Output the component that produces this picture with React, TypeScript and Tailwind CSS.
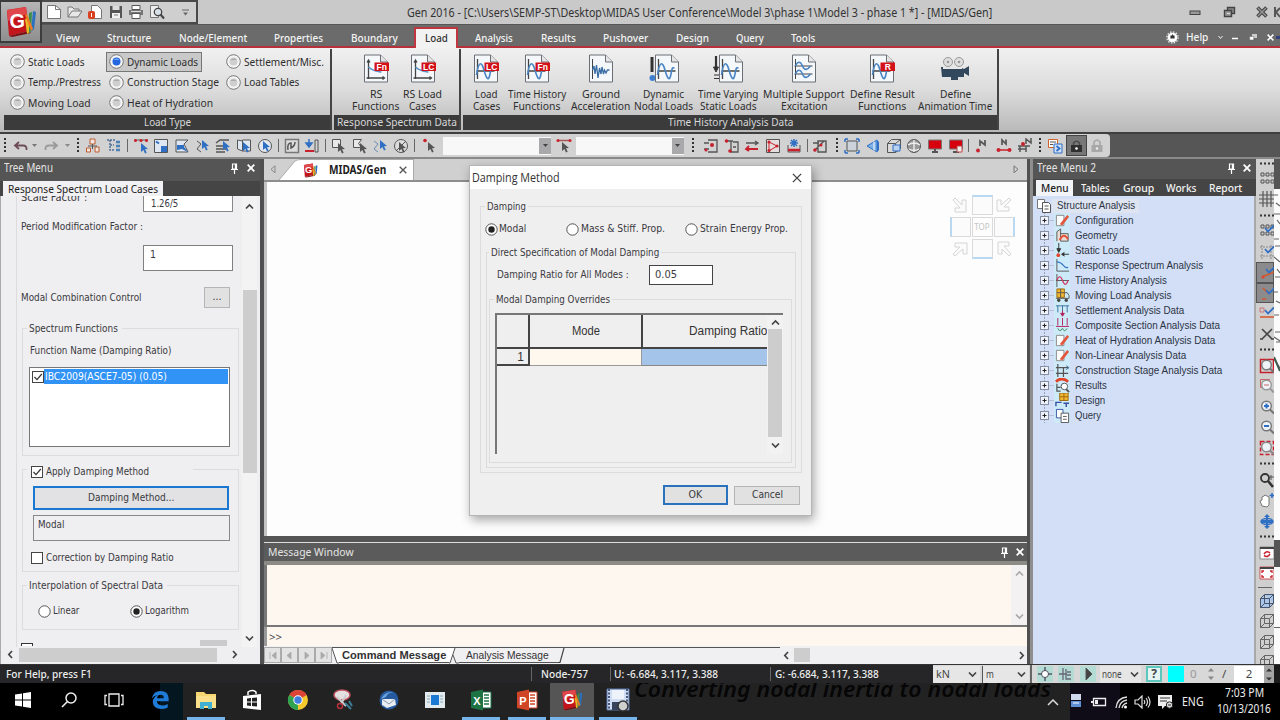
import React, { useLayoutEffect, useRef, useState } from "react";

type Kids = { children?: React.ReactNode };

/* Text set on one line and fitted to a given width */
function T({ w, className = "", children }: { w: number; className?: string } & Kids) {
  const ref = useRef<HTMLSpanElement>(null);
  const [k, setK] = useState(1);
  useLayoutEffect(() => {
    if (ref.current && ref.current.offsetWidth) setK(w / ref.current.offsetWidth);
  }, [w]);
  return (
    <span className={"inline-block shrink-0 text-left whitespace-nowrap " + className} style={{ width: w }}>
      <span ref={ref} className="inline-block origin-left" style={{ transform: `scaleX(${k})` }}>
        {children}
      </span>
    </span>
  );
}

function Ic({ s = 16, h, v, className = "", children }: { s?: number; h?: number; v?: string; className?: string } & Kids) {
  return (
    <svg width={s} height={h ?? s} viewBox={v ?? `0 0 ${s} ${h ?? s}`} fill="none" className={"shrink-0 " + className}>
      {children}
    </svg>
  );
}

const Pin = () => (
  <Ic s={9} h={11}>
    <path d="M2.5 1h4v5h-4zM1 6.5h7M4.5 7v4" stroke="#fff" strokeWidth="1.2" />
    <path d="M5.5 1v5" stroke="#fff" strokeWidth="1.4" />
  </Ic>
);
const Cross = ({ c = "#fff", s = 8, t = 1.8 }: { c?: string; s?: number; t?: number }) => (
  <Ic s={s} v="0 0 8 8">
    <path d="M.7.7l6.6 6.6M7.3.7L.7 7.3" stroke={c} strokeWidth={t} />
  </Ic>
);
const Chev = ({ d, c = "#444", s = 9 }: { d: "u" | "d" | "l" | "r"; c?: string; s?: number }) => (
  <Ic s={s} v="0 0 9 9">
    <path
      d={{ u: "M1 6.5L4.5 3 8 6.5", d: "M1 2.5L4.5 6 8 2.5", l: "M6 1L2.8 4.5 6 8", r: "M3 1l3.200 3.500L3 8" }[d]}
      stroke={c}
      strokeWidth="1.7"
    />
  </Ic>
);

const GLogo = ({ s }: { s: number }) => (
  <Ic s={s} v="0 0 32 32">
    <path d="M2 4l19-3 3 24-20 5z" fill="#c3161c" />
    <path d="M2 4l19-3 .8 7L3 15z" fill="#e0474a" />
    <path d="M4 30l20-5 2 2-19 4z" fill="#7a0d10" />
    <text x="4.500" y="22" fontFamily="Liberation Sans" fontWeight="bold" fontSize="20" fill="#fff">G</text>
    <path d="M20 13l3-1 2 14-3 2z" fill="#e8b923" />
    <path d="M24 7l3-1-1 19-2 2z" fill="#3b8f4a" />
    <path d="M28 5l3 1-2 17-3 3z" fill="#2a6fc0" />
    <path d="M20 9l2-1 6 15-2 2z" fill="#ef7b22" />
  </Ic>
);

const Radio = ({ on }: { on?: boolean }) => (
  <Ic s={13}>
    <circle cx="6.5" cy="6.5" r="5.7" fill="#fff" stroke="#555" />
    {on && <circle cx="6.5" cy="6.5" r="3.2" fill="#222" />}
  </Ic>
);
const Check = ({ on }: { on?: boolean }) => (
  <Ic s={12}>
    <rect x=".5" y=".5" width="11" height="11" fill="#fff" stroke="#444" />
    {on && <path d="M2.500 6l2.500 2.700 4.800-5.700" stroke="#333" strokeWidth="1.200" />}
  </Ic>
);

function Group({ className = "", legend, children }: { className?: string; legend?: React.ReactNode } & Kids) {
  return (
    <div className={"shrink-0 border border-[#dcdbde] " + className}>
      <div className="-mt-[7px] flex h-[14px] items-center">{legend}</div>
      {children}
    </div>
  );
}

/* ---------- header ---------- */

const tabs: [string, number][] = [
  ["View", 24], ["Structure", 44], ["Node/Element", 68], ["Properties", 49], ["Boundary", 47], ["Load", 23],
  ["Analysis", 38], ["Results", 35], ["Pushover", 45], ["Design", 33], ["Query", 28], ["Tools", 24],
];

function Header() {
  return (
    <div className="flex h-[48px] shrink-0 border-b-2 border-[#b8303a] bg-[#6b6b6b]">
      <div className="flex h-[43px] w-[42px] shrink-0 items-center justify-center border-2 border-l-[1px] border-[#3c3c3c] bg-gradient-to-b from-[#b5b5b5] to-[#8f8f8f]">
        <GLogo s={32} />
      </div>
      <div className="flex min-w-0 flex-1 flex-col">
        <div className="flex h-[25px] shrink-0 items-center border-b border-[#565656] bg-[#c9c9c9]">
          <div className="flex h-[24px] w-[156px] shrink-0 items-center gap-[4.500px] border-2 border-l-0 border-[#4a4a4a] bg-[#cfcfcf] pl-[4px]">
            <Ic><path d="M1.500 1.500h8l5 4v9h-13z" fill="#fff" stroke="#777" /><path d="M9.500 1.500v4h5" stroke="#777" /></Ic>
            <Ic><path d="M1 13V3h4l2 2h5v2M1 13l4-6h10l-4 6z" fill="#e8e8e8" stroke="#777" /></Ic>
            <Ic><path d="M4.500 1.500h6l4 4v9h-10z" fill="#fff" stroke="#777" /><rect x="1" y="7" width="7" height="8" rx="2" fill="#d8401f" /><path d="M4.500 9v4" stroke="#fff" /></Ic>
            <Ic><path d="M2 2h12v12H2z" fill="#555" /><path d="M4.500 2h7v4h-7z" fill="#ddd" /><path d="M4 9h8v5H4z" fill="#f2f2f2" /><path d="M6 11h4" stroke="#777" /></Ic>
            <Ic><path d="M4 1.500h8v4H4z" fill="#fff" stroke="#555" /><path d="M1 6h14v5H1z" fill="#777" /><path d="M4 9.500h8v5H4z" fill="#fff" stroke="#555" /><path d="M3 7.500h10" stroke="#ddd" /></Ic>
            <Ic><path d="M1.500 1.500h8v12h-8z" fill="#eee" stroke="#777" /><circle cx="9" cy="8" r="3.700" fill="#d9e2ea" stroke="#444" strokeWidth="1.300" /><path d="M11.500 10.500l3.500 4" stroke="#444" strokeWidth="2" /></Ic>
            <Ic s={7} className="ml-[13px]"><path d="M0 1h7" stroke="#666" /><path d="M1 3.500h5l-2.500 3z" fill="#666" /></Ic>
          </div>
          <div className="ml-[209px] flex h-full items-center pt-[2px] text-[12px] text-[#333]">
            <T w={585} className="leading-[14px]">Gen 2016 - [C:\Users\SEMP-ST\Desktop\MIDAS User Conference\Model 3\phase 1\Model 3 - phase 1 *] - [MIDAS/Gen]</T>
          </div>
          <div className="ml-auto flex items-center pr-[0px]">
            <Ic s={12}><rect x="1" y="5" width="10" height="3.500" fill="#999" stroke="#444" /></Ic>
            <Ic s={13} className="ml-[22px]"><path d="M4.500 1.500h7v6h-7z" fill="#888" stroke="#444" strokeWidth="1.400" /><path d="M1.500 4.500h7v6h-7z" fill="#999" stroke="#444" strokeWidth="1.400" /><path d="M4 7.500h3" stroke="#ddd" /></Ic>
            <Ic s={12} className="ml-[20px]"><path d="M1.500 1.500l9 9M10.500 1.500l-9 9" stroke="#444" strokeWidth="3.600" /><path d="M2 2l8 8M10 2l-8 8" stroke="#999" strokeWidth="1.300" /></Ic>
            <Ic s={7} h={12} className="ml-[5px]"><path d="M2 1v10M2 7l5-5M3 6l4 5" stroke="#555" strokeWidth="2" /></Ic>
          </div>
        </div>
        <div className="flex min-h-0 flex-1 text-[11.500px] font-medium text-[#f4f4f4]">
          {tabs.map(([t, w]) =>
            t === "Load" ? (
              <div key={t} className="-mb-[2px] ml-[3.500px] mr-[3px] mt-[2px] flex h-[21px] w-[44px] shrink-0 items-start justify-center border-2 border-b-0 border-[#c0363f] bg-[#f2f2f2] pt-[2px] text-[#333]">
                <T w={w} className="leading-[14px]">{t}</T>
              </div>
            ) : (
              <div key={t} className="flex shrink-0 items-center pl-[14px] pr-[13.400px] pt-[4px]">
                <T w={w} className="leading-[14px]">{t}</T>
              </div>
            )
          )}
          <div className="ml-auto flex items-center pt-[3px]">
            <Ic s={13}><circle cx="6.500" cy="6.500" r="4.800" fill="#fff" /><circle cx="6.500" cy="6.500" r="5.600" stroke="#ddd" strokeWidth="1.500" strokeDasharray="1.500 1.400" /><path d="M6.500 3.500v4M5 5h3v2H5z" fill="#333" stroke="#333" strokeWidth="1.200" /></Ic>
            <T w={22} className="ml-[7px] leading-[14px]">Help</T>
            <Ic s={5} className="ml-[10px]"><path d="M.5 1l2 2.500 2-2.500" stroke="#eee" /></Ic>
            <Ic s={6} className="ml-[9px]"><path d="M0 4.500h6" stroke="#fff" strokeWidth="1.500" /></Ic>
            <Ic s={8} className="ml-[11px]"><path d="M3 1h5v4H3z" fill="#ccc" /><path d="M.7 3.500h4v3.500h-4z" fill="#fff" stroke="#666" strokeWidth=".5" /></Ic>
            <span className="ml-[10px] flex"><Cross s={7} /></span>
            <span className="ml-[2px] h-[3px] w-[4px] bg-[#35407f]" />
          </div>
        </div>
      </div>
    </div>
  );
}

/* ---------- ribbon ---------- */

const RibRadio = ({ t, w, on }: { t: string; w: number; on?: boolean }) => (
  <div className="flex h-[20.500px] items-center">
    <div className={"flex h-[20px] shrink-0 items-center pl-[2px] pr-[3px] " + (on ? "-ml-[1px] border border-[#777] bg-[#c9c9c9] pl-[1px]" : "")}>
      <Ic s={15}>
        <circle cx="7.500" cy="7.500" r="6.800" fill="#f4f4f4" stroke="#777" />
        <circle cx="7.500" cy="7.500" r="4" fill={on ? "#2465e0" : "#cfcfcf"} />
        <path d="M4.500 6a3.500 3 0 016 0" fill={on ? "#6fa2fa" : "#aaa"} />
      </Ic>
      <T w={w} className="ml-[3px] leading-[14px]">{t}</T>
    </div>
  </div>
);

const wave = "M3 21c2-14 5-14 7.500-5s4.500 12 6 4 1.500-6 3.500-6";
function Doc({ badge, kind, side }: { badge?: string; kind: "rs" | "wave" | "ground" | "multi"; side?: "dot" | "arrow" }) {
  return (
    <Ic s={side ? 30 : 26} h={29}>
      {side === "dot" && <><path d="M3 3v15" stroke="#333" strokeWidth="3" /><circle cx="3.500" cy="24" r="3" fill="#3f7fd0" /></>}
      {side === "arrow" && <><path d="M3 2v12" stroke="#333" strokeWidth="2.200" /><path d="M.5 13h5L3 18zM1 21h5M1 24.500h5" fill="#333" stroke="#333" strokeWidth="1" /></>}
      <g transform={side ? "translate(5.500 0)" : "translate(.5 0)"}>
        <path d="M1 1h16l7 7v20H1z" fill="#f5f8fb" stroke="#6b6f75" />
        <path d="M17 1v7h7" fill="#e5e5e5" stroke="#6b6f75" />
        {kind === "rs" && <><path d="M5 6v19M3 24h18M3.500 8.500L5 6l1.500 2.500M19 22.500l2 1.500-2 1.500" stroke="#444" strokeWidth="1.300" /><path d="M5 13c4 4 7 4 13 5" stroke="#5b93c8" strokeWidth="1.600" /></>}
        {kind === "wave" && <><path d="M4 5v20M3 17h18" stroke="#444" strokeWidth="1.300" /><path d={wave} stroke="#4b86c4" strokeWidth="1.600" /></>}
        {kind === "ground" && <><path d="M4 5v20" stroke="#444" strokeWidth="1" /><path d="M4 16l1.500-4 1 8 1.500-9 1.500 13 1.500-10 1.500 6 1-7 1.500 7 1-4 1.500 3 1.500-3h2" stroke="#3a6ea5" strokeWidth="1.300" /></>}
        {kind === "multi" && <><path d="M4 5v20M3 12h18M3 20h18" stroke="#444" strokeWidth="1" /><path d="M4 12c2-5 5-5 7 0s5 4 8 0M4 20c2-5 5-5 7 0s5 4 8 0" stroke="#4b86c4" strokeWidth="1.600" /></>}
        {badge && (
          <>
            <rect x="11" y="8.500" width="14.500" height="8.500" fill="#d41018" />
            <text x="18.200" y="15.800" textAnchor="middle" fontFamily="Liberation Sans" fontWeight="bold" fontSize="8.500" fill="#fff">{badge}</text>
          </>
        )}
      </g>
    </Ic>
  );
}

const Big = ({ icon, a, b, aw, bw, className }: { icon: React.ReactNode; a: string; b: string; aw: number; bw: number; className: string }) => (
  <div className={"flex shrink-0 flex-col items-center pt-[5px] " + className}>
    {icon}
    <div className="mt-[5px] flex h-[12px] items-center"><T w={aw} className="leading-[14px]">{a}</T></div>
    <div className="flex h-[12px] items-center"><T w={bw} className="leading-[14px]">{b}</T></div>
  </div>
);

const Panel = ({ title, tw, className, children }: { title: string; tw: number; className: string } & Kids) => (
  <div className={"flex h-[81px] shrink-0 flex-col border-r-2 border-[#444] " + className}>
    <div className="flex min-h-0 flex-1">{children}</div>
    <div className="flex h-[15px] items-center justify-center bg-[#3b3b3b] pb-[1px] text-[#d8d8d8]">
      <T w={tw} className="leading-[14px]">{title}</T>
    </div>
  </div>
);

const Ribbon = () => (
  <div className="flex h-[86px] shrink-0 border-b-2 border-[#3f3f3f] bg-gradient-to-b from-[#f1f1f1] via-[#dcdcdc] to-[#b9b9b9] pl-[4px] pt-[1px] text-[11.500px] text-[#2e2e2e]">
    <Panel title="Load Type" tw={47} className="w-[328px]">
      <div className="w-[98.500px] pl-[4px] pt-[2.500px]">
        <RibRadio t="Static Loads" w={57} /><RibRadio t="Temp./Prestress" w={73} /><RibRadio t="Moving Load" w={63} />
      </div>
      <div className="w-[117px] pl-[4px] pt-[2.500px]">
        <RibRadio t="Dynamic Loads" w={71} on /><RibRadio t="Construction Stage" w={92} /><RibRadio t="Heat of Hydration" w={86} />
      </div>
      <div className="pl-[4px] pt-[2.500px]">
        <RibRadio t="Settlement/Misc." w={80} /><RibRadio t="Load Tables" w={55} />
      </div>
    </Panel>
    <Panel title="Response Spectrum Data" tw={120} className="ml-[2px] w-[127px] pl-0">
      <Big className="ml-[16px] w-[51px]" icon={<Doc kind="rs" badge="Fn" />} a="RS" b="Functions" aw={12} bw={47} />
      <Big className="w-[43px]" icon={<Doc kind="rs" badge="LC" />} a="RS Load" b="Cases" aw={39} bw={27} />
    </Panel>
    <Panel title="Time History Analysis Data" tw={125} className="ml-[2px] w-[536px]">
      <Big className="ml-[7px] w-[32px]" icon={<Doc kind="wave" badge="LC" />} a="Load" b="Cases" aw={23} bw={27} />
      <Big className="w-[69px]" icon={<Doc kind="wave" badge="Fn" />} a="Time History" b="Functions" aw={58} bw={47} />
      <Big className="w-[59px]" icon={<Doc kind="ground" />} a="Ground" b="Acceleration" aw={38} bw={59} />
      <Big className="w-[67px]" icon={<Doc kind="wave" side="dot" />} a="Dynamic" b="Nodal Loads" aw={41} bw={59} />
      <Big className="w-[62px]" icon={<Doc kind="wave" side="arrow" />} a="Time Varying" b="Static Loads" aw={60} bw={57} />
      <Big className="w-[90px]" icon={<Doc kind="multi" />} a="Multiple Support" b="Excitation" aw={82} bw={47} />
      <Big className="w-[66px]" icon={<Doc kind="wave" badge="R" />} a="Define Result" b="Functions" aw={65} bw={48} />
      <Big
        className="w-[80px]"
        icon={
          <Ic s={30} h={29}>
            <circle cx="8" cy="8" r="4.500" fill="#dedede" stroke="#999" /><circle cx="19" cy="8" r="4.500" fill="#dedede" stroke="#999" />
            <circle cx="8" cy="8" r="1.300" fill="#999" /><circle cx="19" cy="8" r="1.300" fill="#999" />
            <path d="M1 13h2v2h19v-1l2 1 5-3v10l-5-3v4h-6v3h-7v-3H2z" fill="#32485c" />
          </Ic>
        }
        a="Define" b="Animation Time" aw={31} bw={74}
      />
    </Panel>
  </div>
);

/* ---------- icon toolbar ---------- */

const cur = (x: number, y: number, c: string) => <path d={`M${x} ${y}l7 6-3 .3 1.700 3.400-1.700.8-1.600-3.400-2.400 2z`} fill={c} />;
const B = "#2f6fc4";
const K = "#555";
const R = "#c8202c";
const sq = "M1.500 1.500h13v13h-13z";

const Slot = ({ children }: Kids) => (
  <div className="flex h-full w-[20.700px] shrink-0 items-center justify-center"><Ic>{children}</Ic></div>
);
const Sep = () => <div className="mx-[2.500px] h-[13px] w-[1px] shrink-0 bg-[#666]" />;
const Grip = () => (
  <Ic s={6} h={16}><path d="M3 0v16" stroke="#333" strokeWidth="2" strokeDasharray="2 2" /></Ic>
);
const Combo = () => (
  <div className="flex h-[18px] w-[108px] shrink-0 items-center justify-end bg-[#f8f8f8]">
    <div className="flex h-[16px] w-[12px] items-center justify-center bg-[#a9a9ac]"><Ic s={5}><path d="M0 1h5l-2.500 3z" fill="#444" /></Ic></div>
  </div>
);

const Toolbar = () => (
  <div className="flex h-[25px] shrink-0 border-b-2 border-[#8a8a8a] bg-[#565656]">
    <div className="flex w-[1110px] shrink-0 items-center rounded-r-sm bg-[#d2d2d2] pl-[2px]">
      <Grip />
      <Ic className="ml-[5px]"><path d="M6 4L2 7.500 6 11M2 7.500h8q4 0 3.500 4.500" stroke="#6d4c56" strokeWidth="1.800" /></Ic>
      <Ic s={5} className="ml-[3px]"><path d="M0 1h5l-2.500 3z" fill="#777" /></Ic>
      <Ic className="ml-[6px]"><path d="M10 4l4 3.500-4 3.500M14 7.500H6q-4 0-3.500 4.500" stroke="#999" strokeWidth="1.800" /></Ic>
      <Ic s={5} className="ml-[6px]"><path d="M0 1h5l-2.500 3z" fill="#888" /></Ic>
      <span className="ml-[5px] mr-[2px] flex"><Grip /></span>
      <Slot><path d="M5 1h5v5H5zM1.500 10h4v4h-4zM10 9h4v5h-4z" fill="#f0e6df" stroke="#c05a2c" /><path d="M7.500 6v5M3 8h9" stroke={K} /></Slot>
      <Slot><path d="M1 2h8M4 2v10h4M4 7h4" stroke="#4d6f96" strokeDasharray="2 1" strokeWidth="1.500" /><path d="M10 4h4M10 8h4M10 12h4" stroke="#4d80b5" strokeWidth="2.500" /></Slot>
      <Sep />
      <Slot><path d="M1 2h14" stroke={K} /><circle cx="2.500" cy="2.500" r="1.500" fill={R} /><circle cx="8" cy="2.500" r="1.500" fill={R} /><circle cx="13.500" cy="2.500" r="1.500" fill={R} />{cur(8, 5, B)}</Slot>
      <Slot><path d={sq} stroke={K} fill="#dfe8f2" /><path d="M3 3.500l3 2" stroke={B} strokeWidth="2" /><path d="M8 8h6v6H8z" fill={B} /></Slot>
      <Slot><path d="M2 2h12l-4 4 4 8H2z" fill="#dfe8f2" stroke={K} /><path d="M3 7h7v2l4 5-6-3-5 1z" fill={B} /></Slot>
      <Slot><path d="M2 3l4 3-4 5 4 3" stroke={K} />{cur(7, 2, B)}</Slot>
      <Slot><path d="M1 5l4-3h9M1 8h11M1 11h11M1 14h9" stroke={K} strokeWidth="1.500" />{cur(8, 3, B)}</Slot>
      <Slot><path d="M1.500 2l5 1v10l-5-2zM6.500 2h8v11h-8z" stroke={K} fill="#dfe8f2" />{cur(7, 4, B)}</Slot>
      <Slot><circle cx="8" cy="8" r="6.500" stroke={K} fill="#e4e9ef" />{cur(6, 3, B)}</Slot>
      <Sep />
      <Slot><path d={sq} stroke="#777" strokeWidth="1.500" fill="#ddd" /><path d="M4 12q-1-7 3-7v5q4-2 4-6" stroke="#555" strokeWidth="1.500" /></Slot>
      <Slot><path d="M5 1v6M2 5l3 4 3-4z" fill={B} stroke={B} strokeWidth="1.500" /><path d="M1 13h9" stroke={R} strokeWidth="2" /><path d="M11 2h3v12h-3z" stroke={K} /></Slot>
      <Sep />
      <Slot><path d="M1.500 1.500h8v8h-8z" stroke={K} fill="#e8e8e8" />{cur(7, 5, K)}</Slot>
      <Slot><path d="M1.500 1.500h8l-3 4 3 4h-8z" stroke={K} fill="#e8e8e8" />{cur(8, 5, K)}</Slot>
      <Slot><path d="M2 3l4 3-4 5 4 3" stroke="#6a8caf" />{cur(8, 2, B)}</Slot>
      <Slot><circle cx="8" cy="8" r="6.500" stroke={K} fill="#ddd" /><path d="M3 13L13 3" stroke={K} />{cur(6, 4, K)}</Slot>
      <Sep />
      <span className="ml-[2px] flex"><Slot><circle cx="3" cy="2.500" r="1.800" fill={R} />{cur(6, 4, K)}</Slot></span>
      <span className="ml-[3px] flex"><Combo /></span>
      <span className="ml-[3px] flex"><Slot><path d="M2 2.500h12" stroke="#a55" strokeWidth="1.500" /><circle cx="2" cy="2.500" r="1.500" fill={R} /><circle cx="14" cy="2.500" r="1.500" fill={R} />{cur(6, 4, K)}</Slot></span>
      <span className="ml-[1px] flex"><Combo /></span>
      <span className="ml-[6px] mr-[5px] flex"><Grip /></span>
      <Slot><path d="M5 2h9v12H5M1 5h5M1 11h5" stroke={K} strokeWidth="1.300" /><circle cx="9" cy="7" r="2" fill={R} /><circle cx="3" cy="12" r="1.500" fill={R} /></Slot>
      <Slot><path d="M2 3h7M7 3v11h7V4H9M9 9h3" stroke={K} strokeWidth="1.300" /><circle cx="2.500" cy="3" r="1.800" fill={R} /><circle cx="6" cy="13" r="1.800" fill={R} /></Slot>
      <Slot><path d="M2 5h12M11 3l3 2-3 2" stroke={K} strokeWidth="1.300" /><path d="M2 11h12M5 8l-3 3 3 2" stroke={R} strokeWidth="1.800" /></Slot>
      <Slot><path d={sq} stroke={K} fill="#e6dede" /><path d="M4 4l8 4-8 5z" stroke={R} /><circle cx="4" cy="4" r="1.600" fill={R} /><circle cx="12" cy="8" r="1.600" fill={R} /><circle cx="4" cy="12.500" r="1.600" fill={R} /></Slot>
      <Slot><path d="M2 7v7h12V7" stroke={K} /><path d="M8 1v8M4 5h8M5 2l6 6M11 2L5 8" stroke={B} strokeWidth="1.500" /><path d="M2 12h12" stroke={R} strokeWidth="2.500" /></Slot>
      <Sep />
      <Slot><path d="M6 3h8v11H6zM1 5h6M2 13L12 3" stroke={K} strokeWidth="1.400" /><circle cx="3" cy="12" r="1.800" fill={R} /><circle cx="9" cy="7" r="1.500" fill={R} /></Slot>
      <span className="ml-[3px] mr-[2px] flex"><Grip /></span>
      <Slot><path d="M3 3h10v10H3z" stroke={K} fill="#ccd3da" /><path d="M1 1h3M12 1h3M1 15h3M12 15h3M1 1v3M15 1v3M1 12v3M15 12v3" stroke={B} strokeWidth="1.500" /></Slot>
      <Slot><path d="M12 2v12L2 8z" fill="#7fb0e6" stroke={B} /><path d="M9 3.500v9" stroke="#fff" /><path d="M12 2l2 2v8l-2 2" fill={B} /></Slot>
      <Slot><path d="M1.500 5.500h8v9h-8zM1.500 5.500l4-4h9v9l-5 4M9.500 5.500l5-4" fill="#d9d9d9" stroke={K} /><path d="M7 7h7v6H7z" fill="#b8d2ef" stroke={B} /></Slot>
      <Slot><circle cx="8" cy="8" r="6.500" fill="#999" stroke={K} /><path d="M2 7q6-4 12 0M3 11q5 3 10 0M8 2v12" stroke="#eee" strokeWidth="1.400" /></Slot>
      <Slot><path d="M1.500 2h13v9h-13z" fill="#d6000e" stroke="#777" /><path d="M5 14h6M8 11v3" stroke={K} strokeWidth="2" /></Slot>
      <Slot><path d="M1.500 2h13v9h-13z" fill="#d6000e" stroke="#777" /><path d="M5 14h6" stroke={K} strokeWidth="2" /><path d="M9 8h5v6H9z" fill="#eee" stroke="#b44" /></Slot>
      <Sep />
      <span className="ml-[1px] flex"><Slot><path d="M5 8V3l5 4V2" stroke={K} strokeWidth="1.700" /><circle cx="3" cy="12.500" r="1.900" fill={R} /></Slot></span>
      <Slot><path d="M6 7V2l4 4V1.500" stroke={K} strokeWidth="1.700" /><path d="M2 12h12" stroke={R} strokeWidth="1.500" /><circle cx="2.500" cy="12" r="2" fill={R} /><circle cx="13.500" cy="12" r="2" fill={R} /></Slot>
      <Slot><path d="M9 6V1l5 4V0M1 8h12M3 8v6M9 8v6M1 11h8" stroke={K} strokeWidth="1.500" /><circle cx="6" cy="6" r="2" fill={R} /></Slot>
      <span className="ml-[2px] mr-[2px] flex"><Grip /></span>
      <Slot><path d="M1.500 1.500h9v8h-9z" fill="#fff" stroke="#d0622c" /><path d="M3 4h6M3 6.500h3" stroke={K} /><path d="M7 6h8v9H7z" fill="#cfe0f6" stroke={B} /><path d="M9.500 8l3 2.500-3 2.500" stroke={B} strokeWidth="1.800" /></Slot>
      <div className="flex h-[21px] w-[21px] shrink-0 items-center justify-center border border-[#444] bg-[#777]">
        <Ic><path d="M3 7h11v7H3z" fill="#2f2f2f" /><path d="M5.500 7V5q3-3.500 6 0v2" stroke="#4a4a4a" strokeWidth="1.500" /><circle cx="8.500" cy="10.500" r="1.300" fill="#fff" /></Ic>
      </div>
      <Slot><path d="M2.500 7h11v7h-11z" fill="#a8a8a8" /><path d="M5 7V4q3-4 6 0v3" stroke="#a8a8a8" strokeWidth="1.600" /><circle cx="8" cy="10.500" r="1.200" fill="#eee" /></Slot>
    </div>
  </div>
);

/* ---------- left panel ---------- */

const tah = "font-['DejaVu_Sans_Condensed','DejaVu_Sans',sans-serif] text-[10.500px] text-[#3a3a3f]";

const LeftPanel = () => (
  <div className="flex w-[264px] shrink-0 flex-col border-r-[4px] border-[#505050] bg-[#efeef0]">
    <div className="flex h-[22px] shrink-0 items-center bg-[#555] pl-[4px] pr-[5px] text-[12px] text-[#e4e4e4]">
      <T w={49} className="-mt-[4px] leading-[14px]">Tree Menu</T>
      <span className="-mt-[4px] ml-auto flex items-center gap-[8px]"><Pin /><Cross /></span>
    </div>
    <div className="flex h-[15px] shrink-0 bg-[#454545] pl-[3px] text-[11.500px] text-[#222]">
      <div className="flex w-[160px] items-center bg-[#f1f0f2] pb-[1px] pl-[5px]"><T w={150} className="leading-[13px]">Response Spectrum Load Cases</T></div>
    </div>
    <div className={"flex min-h-0 flex-1 border-l border-[#aaa] " + tah}>
      <div className="flex min-w-0 flex-1 flex-col">
        <div className="flex min-h-0 flex-1">
          <div className="ml-[15px] flex h-full w-[226px] shrink-0 flex-col overflow-hidden border-l border-[#dcdbde]">
            <div className="flex h-[16px] shrink-0 items-start pl-[4px]">
              <T w={66} className="-mt-[5px] leading-[12px]">Scale Factor :</T>
              <div className="ml-[56px] h-[16px] w-[90px] overflow-hidden border border-t-0 border-[#888] bg-white pl-[7px]"><T w={27} className="-mt-[6px] leading-[12px]">1.26/5</T></div>
            </div>
            <div className="mt-[8px] flex h-[14px] shrink-0 items-center pl-[4px]"><T w={122}>Period Modification Factor :</T></div>
            <div className="ml-[126px] mt-[11px] h-[26px] w-[90px] shrink-0 border border-[#808080] bg-white pl-[6px] pt-[1px] leading-[14px]">1</div>
            <div className="mt-[16px] flex h-[21px] shrink-0 items-center pl-[4px]">
              <T w={121}>Modal Combination Control</T>
              <div className="ml-[62px] flex h-[21px] w-[26px] items-center justify-center border border-[#b5b5b5] bg-[#e1e1e1] pb-[2px]">...</div>
            </div>
            <Group className="ml-[5px] mt-[20px] h-[128px] w-[217px]" legend={<span className="ml-[4px] flex bg-[#efeef0] pl-[2px] pr-[4px]"><T w={89}>Spectrum Functions</T></span>}>
              <div className="mt-[8px] flex h-[14px] items-center pl-[7px]"><T w={141}>Function Name (Damping Ratio)</T></div>
              <div className="ml-[6px] mt-[9px] h-[80px] w-[201px] border border-[#777] bg-white pt-[1px]">
                <div className="flex h-[15px] items-center pl-[2px] pr-[1px]">
                  <Check on />
                  <div className="flex h-[15px] flex-1 items-center bg-[#3093f5] pl-[1px] text-white"><T w={122}>IBC2009(ASCE7-05) (0.05)</T></div>
                </div>
              </div>
            </Group>
            <Group className="ml-[5px] mt-[13px] h-[103px] w-[217px]" legend={<span className="ml-[4px] mt-[4px] flex items-center bg-[#efeef0] pl-[4px] pr-[44px]"><Check on /><T w={103} className="ml-[3px]">Apply Damping Method</T></span>}>
              <div className="ml-[10px] mt-[9px] flex h-[24px] w-[196px] items-center justify-center border-2 border-[#1a77d2] bg-[#e2e1e3]"><T w={86}>Damping Method...</T></div>
              <div className="ml-[10px] mt-[5px] h-[26px] w-[197px] border border-[#888] pl-[4px] pt-[1px] leading-[14px]"><T w={26}>Modal</T></div>
              <div className="mt-[10px] flex h-[14px] items-center pl-[8px]"><Check /><T w={128} className="ml-[3px]">Correction by Damping Ratio</T></div>
            </Group>
            <Group className="ml-[5px] mt-[13px] h-[45px] w-[217px]" legend={<span className="ml-[4px] flex bg-[#efeef0] pl-[2px] pr-[4px]"><T w={134}>Interpolation of Spectral Data</T></span>}>
              <div className="mt-[11px] flex h-[14px] items-center pl-[15px]">
                <Radio /><T w={26} className="ml-[2px]">Linear</T><span className="ml-[51px] flex"><Radio on /></span><T w={44} className="ml-[2px]">Logarithm</T>
              </div>
            </Group>
            <div className="mt-[8px] flex h-[8px] shrink-0 items-end pl-[4px]">
              <span className="h-[3px] w-[12px] border border-b-0 border-[#333] bg-white" />
              <span className="ml-[167px] h-[6px] w-[27px] bg-[#cbcbcd]" />
            </div>
          </div>
          <div className="flex w-[15px] shrink-0 flex-col items-center bg-[#f3f3f4] pb-[4px] pt-[6px]">
            <Chev d="u" />
            <div className="mt-[79px] h-[183px] w-[14px] bg-[#cdcdce]" />
            <span className="mt-auto flex"><Chev d="d" /></span>
          </div>
        </div>
        <div className="mb-[2px] flex h-[15px] shrink-0 items-center pl-[5px] pr-[21px]">
          <Chev d="l" />
          <div className="ml-[4px] h-[14px] w-[198px] bg-[#cdcdce]" />
          <span className="ml-auto flex"><Chev d="r" /></span>
        </div>
      </div>
    </div>
  </div>
);

/* ---------- centre ---------- */

const Diag = ({ r }: { r: string }) => (
  <Ic s={16} className={r}><path d="M1 3l2-2 7 7V3h4v12H3v-4h5z" fill="#fbfbfb" stroke="#d5d5d5" /></Ic>
);

const Center = () => (
  <div className="flex w-[766px] shrink-0 flex-col border-r-[3px] border-[#505050] bg-[#555]">
    <div className="flex h-[23px] shrink-0 items-center border-b-2 border-[#8d8d8d] bg-[#d0d0d0]">
      <Ic s={6} h={9} className="ml-[6px]"><path d="M5 .8v7L1 4.300z" stroke="#888" /></Ic>
      <div className="ml-[3px] flex h-full items-end">
        <Ic s={22} h={21}><path d="M0 21L16 2q2-2 6-2v21z" fill="#fff" /><path d="M0 21L16 2q2-1.500 6-1.500" stroke="#aaa" /></Ic>
        <div className="flex h-[21px] w-[113px] items-center border-r border-t border-[#aaa] bg-white text-[11.500px] font-bold text-[#222]">
          <span className="ml-[2px] flex"><GLogo s={15} /></span>
          <T w={57} className="ml-[11px] leading-[14px]">MIDAS/Gen</T>
          <span className="ml-[13px] flex"><Cross c="#555" t={1.300} /></span>
        </div>
      </div>
      <Ic s={6} h={9} className="ml-auto mr-[8px]"><path d="M1 .8v7l4-3.500z" stroke="#777" /></Ic>
    </div>
    <div className="flex h-[354px] shrink-0 justify-end border-l-[3px] border-[#c4c4c4] bg-[#fdfdfd] pr-[12px] pt-[12px]">
      <div className="grid h-[66px] w-[66px] grid-cols-3 grid-rows-3 place-items-center">
        <Diag r="" />
        <div className="h-[20px] w-[21px] border border-t-2 border-[#dadada] border-t-[#b9d8f2] bg-[#fbfbfb]" />
        <Diag r="rotate-90" />
        <div className="h-[20px] w-[21px] border border-l-2 border-[#dadada] border-l-[#b9d8f2] bg-[#fbfbfb]" />
        <div className="flex h-[20px] w-[21px] items-center justify-center border border-[#dadada] text-[8px] text-[#c4c4c4]">TOP</div>
        <div className="h-[20px] w-[21px] border border-r-2 border-[#dadada] border-r-[#b9d8f2] bg-[#fbfbfb]" />
        <Diag r="-rotate-90" />
        <div className="h-[20px] w-[21px] border border-b-2 border-[#dadada] border-b-[#b9d8f2] bg-[#fbfbfb]" />
        <Diag r="rotate-180" />
      </div>
    </div>
    <div className="mt-[6px] flex h-[19px] shrink-0 items-center border-t border-[#ddd] bg-[#5b5b5b] pl-[4px] pr-[3px] text-[11.500px] text-[#e4e4e4]">
      <T w={86} className="leading-[14px]">Message Window</T>
      <span className="ml-auto flex items-center gap-[7px]"><Pin /><Cross /></span>
    </div>
    <div className="h-[4px] shrink-0 bg-[#8d8b86]" />
    <div className="flex h-[62px] shrink-0 border-b-2 border-l-[3px] border-[#777] bg-[#fef7ef]">
      <div className="ml-auto flex w-[16px] flex-col items-center justify-between bg-[#f3f1f1] py-[4px]"><Chev d="u" c="#aaa" /><Chev d="d" c="#aaa" /></div>
    </div>
    <div className="flex h-[19px] shrink-0 items-center border-l-[3px] border-[#999] bg-[#fef7ef] pl-[2px] pt-[1px] text-[11.500px] text-[#444]"><T w={13}>&gt;&gt;</T></div>
    <div className="flex min-h-0 flex-1 items-start bg-[#f0eff1] pt-[1px] font-['Liberation_Sans',sans-serif] text-[11px] text-[#333]">
      {["M2 1v7M8 1v7L4 4.500z", "M6 1v7L2 4.500z", "M3 1v7l4-3.500z", "M8 1v7M2 1v7l4-3.500z"].map((d) => (
        <div key={d} className="flex h-[16px] w-[17px] shrink-0 items-center justify-center border border-[#aaa] bg-[#e3e3e3]"><Ic s={9}><path d={d} fill="#aaa" stroke="#aaa" strokeWidth=".8" /></Ic></div>
      ))}
      <div className="flex h-[16px] w-[448px] items-start border-t border-[#555]">
        <Ic s={7} h={16}><path d="M0 0h7v15H5z" fill="#fff" /><path d="M0 0l5 15h2" stroke="#555" /></Ic>
        <div className="flex h-[15px] items-center border-b border-[#555] bg-white px-[3px] font-bold"><T w={104}>Command Message</T></div>
        <Ic s={10} h={16}><path d="M0 0h6L1 15H0z" fill="#fff" /><path d="M0 15h1L6 0M4 7l3 8h3" stroke="#555" /></Ic>
        <div className="flex h-[15px] items-center border-b border-[#555] pl-[7px] pr-[9px]"><T w={83}>Analysis Message</T></div>
        <Ic s={8} h={16}><path d="M0 14.500h2L6 0" stroke="#444" strokeWidth="1.200" /></Ic>
      </div>
      <div className="flex h-[16px] min-w-0 flex-1 items-center pl-[2px] pr-[1px]">
        <Chev d="l" /><div className="ml-[3px] h-[14px] w-[16px] bg-[#cdcdce]" /><span className="ml-auto flex"><Chev d="r" /></span>
      </div>
    </div>
  </div>
);

/* ---------- right panel ---------- */

const cfg = <><path d="M1.500 2.500h8v11h-8z" fill="#fff" stroke="#888" /><path d="M5 12l8-10 2 2-7 9z" fill="#e2553a" /></>;
const tree: [string, number, React.ReactNode][] = [
  ["Configuration", 58, cfg],
  ["Geometry", 42, <><path d="M2 14V4l4-3v13M6 6h8v8H6" stroke={K} fill="#e9ddd6" /><path d="M5 13q4-9 9-1" stroke="#e2553a" strokeWidth="2" /></>],
  ["Static Loads", 55, <><path d="M4 0v8M2 6l2 4 2-4zM8 12h7M10 10l-3 2 3 2" stroke="#333" fill="#333" /><circle cx="3.500" cy="13" r="2" fill="#e2452a" /></>],
  ["Response Spectrum Analysis", 128, <><path d="M2 1v13h13" stroke={K} /><path d="M2 4q5 1 7 4t5 2" stroke={B} strokeWidth="1.300" /></>],
  ["Time History Analysis", 92, <><path d="M2 1v14M1 8h14" stroke={K} /><path d="M2 8q3-8 6 0t6 0" stroke="#d0365c" strokeWidth="1.300" /></>],
  ["Moving Load Analysis", 96, <><path d="M2 1h8v9H2z" fill="#f2b632" stroke="#9b6a10" /><path d="M6 1v9M2 5h8M10 5h3l2 3v3H1" stroke={K} fill="none" /><circle cx="4" cy="13" r="1.800" fill="#444" /><circle cx="12" cy="13" r="1.800" fill="#444" /></>],
  ["Settlement Analysis Data", 109, <><path d="M1 3h14M3 3v7M8 3v6M13 3v7" stroke="#3c6f9a" /><path d="M8 8v6M6 11l2 3 2-3z" stroke="#b2215b" fill="#b2215b" /></>],
  ["Composite Section Analysis Data", 145, <><path d="M3 0v8M8 0v8M13 0v8M1 9h14" stroke="#b2215b" /><path d="M3 11q2 5 5 0 2 5 5 0" stroke="#418a58" /></>],
  ["Heat of Hydration Analysis Data", 140, cfg],
  ["Non-Linear Analysis Data", 111, cfg],
  ["Construction Stage Analysis Data", 147, <><path d="M3 1v14M1 5h13M1 11h13M9 5v10" stroke={K} strokeWidth="1.300" /><path d="M12 3l3 2-3 2" stroke="#3c6f9a" /></>],
  ["Results", 32, <><path d="M1 4q6-6 13 0" stroke="#e2452a" strokeWidth="3" /><path d="M2 6v8h4M2 10h4" stroke={K} strokeWidth="1.300" /><circle cx="10" cy="9" r="3.500" stroke={K} fill="#fff" /><path d="M12 12l3 3" stroke={K} strokeWidth="2" /></>],
  ["Design", 30, <><path d="M5 0h9v8H5z" fill="#f2b632" stroke="#9b6a10" /><path d="M9.500 0v8M5 4h9" stroke="#9b6a10" /><path d="M1 14V10h6M9 11h6M12 11v4" stroke="#3550a5" strokeWidth="1.500" /></>],
  ["Query", 26, <><path d="M1.500 1.500h7v9h-7z" fill="#fff" stroke="#3550a5" /><path d="M6.500 5.500h8v10h-8z" fill="#fff" stroke={K} /><path d="M8.500 9h4M8.500 12h4" stroke={K} /></>],
];

const RightPanel = () => (
  <div className="flex w-[226px] shrink-0 flex-col border-l-[3px] border-[#8e8e8e] bg-[#454545]">
    <div className="flex h-[20px] shrink-0 items-center bg-[#555] pl-[4px] pr-[5px] text-[12px] text-[#e4e4e4]">
      <T w={59} className="-mt-[2px] leading-[14px]">Tree Menu 2</T>
      <span className="-mt-[2px] ml-auto flex items-center gap-[7px]"><Pin /><Cross /></span>
    </div>
    <div className="flex h-[17px] shrink-0 items-center text-[11.500px] font-medium text-[#f2f2f2]">
      <div className="ml-[3px] flex h-[16px] w-[37px] items-center justify-center bg-[#f3f4f7] text-[#222]"><T w={28} className="leading-[14px]">Menu</T></div>
      <T w={29} className="ml-[8px] leading-[14px]">Tables</T>
      <T w={31} className="ml-[13px] leading-[14px]">Group</T>
      <T w={31} className="ml-[12px] leading-[14px]">Works</T>
      <T w={33} className="ml-[12px] leading-[14px]">Report</T>
    </div>
    <div className="flex min-h-0 flex-1 flex-col border-r-2 border-[#a9a9a9] bg-[#d3dff6] pl-[3px] pt-[2px] font-['Liberation_Sans',sans-serif] text-[11px] text-[#2b3444]">
      <div className="flex h-[15px] items-center">
        <Ic><path d="M1.500 1.500h7v9h-7z" fill="#fff" stroke="#777" /><path d="M6.500 4.500h6l2 2v8h-8z" fill="#fff" stroke="#555" /><path d="M8.500 8h4M8.500 11h4" stroke="#555" /></Ic>
        <div className="flex h-[14px] items-center bg-[#dfe5f0] pl-[5px] pr-[4px]"><T w={78}>Structure Analysis</T></div>
      </div>
      {tree.map(([t, w, ic]) => (
        <div key={t} className="flex h-[15px] shrink-0 items-center">
          <Ic s={18} h={15}>
            <path d="M8.500 0v15M8.500 7.500H18" stroke="#9aa3b5" strokeDasharray="1 1" />
            <rect x="4.500" y="3.500" width="8" height="8" fill="#eef2fa" stroke="#8690a2" />
            <path d="M6.500 7.500h4M8.500 5.500v4" stroke="#222" />
          </Ic>
          <div className="flex h-[15px] w-[16px] shrink-0 items-center justify-center bg-[#cdeaf8]"><Ic s={15} v="0 0 16 16">{ic}</Ic></div>
          <T w={w} className="ml-[5px]">{t}</T>
        </div>
      ))}
    </div>
  </div>
);

const VSlot = ({ on, children }: { on?: boolean } & Kids) => (
  <div className={"flex h-[20.500px] w-full shrink-0 items-center pl-[3px] " + (on ? "border border-[#555] bg-[#8b8b8d] pl-[2px]" : "")}><Ic>{children}</Ic></div>
);
const VGrip = ({ first }: { first?: boolean }) => (
  <div className={"flex shrink-0 items-center pl-[4px] " + (first ? "h-[9.500px]" : "h-[11.500px]")}><Ic s={14} h={3}><path d="M0 1.500h14" stroke="#333" strokeWidth="2" strokeDasharray="2 2" /></Ic></div>
);
const mag = (c: string, inner?: React.ReactNode) => (
  <><circle cx="7.500" cy="7" r="4.800" fill="#eef3f7" stroke={c} strokeWidth="1.400" /><path d="M11 10.500l4 4" stroke={c} strokeWidth="2" />{inner}</>
);
const dots = "M2 2h3v3H2zM7 2h3v3H7zM12 2h3v3h-3zM2 9h3v3H2zM7 9h3v3H7zM12 9h3v3h-3z";
const cube = "M1.500 5.500h9v9h-9zM1.500 5.500l4-4h9v9l-4 4M10.500 5.500l4-4M5.500 1.500v9h9M5.500 10.500l-4 4";
const tick = <path d="M6 5l3 3.500 6-6" stroke={B} strokeWidth="1.800" />;

const RightTools = () => (
  <div className="flex w-[18px] shrink-0 flex-col overflow-hidden bg-[#cfcfcf]">
    <VGrip first />
    <VSlot><path d={dots} stroke={K} /></VSlot>
    <VSlot><path d="M4 0v16M8 0v16M12 0v16M0 4h16M0 8h16M0 12h16" stroke={K} strokeWidth="1.200" /></VSlot>
    <VGrip />
    <VSlot><path d={dots} stroke={K} />{tick}</VSlot>
    <VSlot><path d="M1 3h14M1 12h14M3 1v14M12 1v14" stroke="#888" strokeDasharray="2 1" />{tick}</VSlot>
    <VSlot on><path d="M2 13l12-5" stroke="#d5572c" strokeWidth="1.500" /><circle cx="3" cy="13" r="1.500" fill="#e2452a" />{tick}</VSlot>
    <VSlot on><path d="M2 14h4M3 3l5 5" stroke="#d5572c" strokeWidth="1.500" />{tick}</VSlot>
    <VSlot><path d="M1 12h14" stroke="#d5572c" strokeWidth="1.500" /><path d="M1 3h4v4H1z" stroke="#c77" />{tick}</VSlot>
    <VSlot><path d="M3 3l10 10M13 3L3 13M1 13h3M12 13h3" stroke="#444" strokeWidth="1.600" /></VSlot>
    <VGrip />
    <VSlot><path d={sq} stroke={R} strokeWidth="1.500" />{mag("#777")}</VSlot>
    <VSlot><path d="M1.500 1.500h9v8h-9z" stroke="#c66" />{mag("#999", <path d="M5 7h5" stroke="#c66" />)}</VSlot>
    <VSlot>{mag("#777", <path d="M5 7h5M7.500 4.500v5" stroke={B} strokeWidth="2" />)}</VSlot>
    <VSlot>{mag("#777", <path d="M5 7h5" stroke={B} strokeWidth="2" />)}</VSlot>
    <VSlot><path d={sq} stroke={R} strokeWidth="1.500" strokeDasharray="4 2" />{mag("#888")}</VSlot>
    <VGrip />
    <VSlot><circle cx="6" cy="6" r="4" stroke="#333" strokeWidth="1.800" /><path d="M9 9l5 6" stroke="#333" strokeWidth="2.600" /><path d="M12 3v5M10 5h5" stroke={K} /></VSlot>
    <VSlot><path d="M3 14l-2-5 2-1V5l2-1 1-1 2 1 2 1v8l-2 2z" fill="#fff" stroke="#777" /><path d="M13 1v5M10.500 3.500h5" stroke={B} strokeWidth="1.500" /></VSlot>
    <VSlot><path d="M8 1l3 3H9v3h5v3H9v3h2l-3 3-3-3h2v-3H2V7h5V4H5z" fill={B} /><ellipse cx="8" cy="8.500" rx="6" ry="3" stroke={B} strokeWidth="1.500" /></VSlot>
    <VGrip />
    <VSlot><path d="M1 2h14v12H1z" fill="#fff" stroke="#888" /><path d="M1 3h14" stroke="#444" strokeWidth="2" /><path d="M5 9q3-4 6-1M11 9q-2 4-6 1.500" stroke={R} strokeWidth="1.600" /></VSlot>
    <VSlot><path d="M1 2h14v12H1z" fill="#fff" stroke="#c55" /><path d="M1 3h14" stroke="#444" strokeWidth="2" /><path d="M3 8V6h2M11 6h2v2M3 10v2h2M11 12h2v-2" stroke={R} strokeWidth="1.300" /></VSlot>
    <div className="mx-auto my-[3px] h-[1px] w-[14px] shrink-0 bg-[#666]" />
    <VSlot><path d={cube} stroke="#46556d" fill="#a9c6ea" /></VSlot>
    <VSlot><path d={cube} stroke="#666" /></VSlot>
    <VSlot><path d={cube} stroke="#666" /></VSlot>
    <VSlot><path d={cube} stroke="#666" /></VSlot>
  </div>
);

const Strip = () => (
  <div className="flex w-[6px] shrink-0 flex-col bg-[#fbfbfb]">
    <div className="h-[30px] shrink-0 bg-[#555]" />
    <Ic s={6} h={340}>
      <path d="M0 6h4M2 14l4 3M0 25h6M3 31l3 4M0 50h5M1 57h5M0 68l6 5M3 80l3 4M1 88h5M0 103h4M2 112l4 2M0 126h5M1 143h5M0 148l6 4M2 153h4M0 170l6 9" stroke="#666" strokeWidth="1.200" />
      <path d="M0 168l6 14" stroke="#3d5c50" strokeWidth="2" />
    </Ic>
    <div className="mt-[11px] h-[27px] shrink-0 bg-[#555]" />
    <div className="mt-[60px] h-[1px] shrink-0 bg-[#666]" />
  </div>
);

/* ---------- dialog ---------- */

const Dialog = () => (
  <div className={"absolute left-[469px] top-[165px] flex h-[351px] w-[343px] flex-col border border-[#b5b5b5] bg-[#f0eff0] shadow-[2px_4px_10px_rgba(0,0,0,0.35)] " + tah}>
    <div className="flex h-[23px] shrink-0 items-center bg-white pl-[2px] pr-[9px] font-['Open_Sans',sans-serif] text-[12px] text-[#333]">
      <T w={88}>Damping Method</T>
      <span className="ml-auto flex"><Cross c="#444" s={10} t={1.100} /></span>
    </div>
    <Group className="ml-[10px] mt-[17px] h-[267px] w-[322px]" legend={<span className="ml-[4px] flex bg-[#f0eff0] px-[2px]"><T w={39}>Damping</T></span>}>
      <div className="mt-[8px] flex h-[14px] items-center pl-[4px]">
        <Radio on /><T w={27} className="ml-[1px]">Modal</T>
        <span className="ml-[40px] flex"><Radio /></span><T w={84} className="ml-[2px]">Mass &amp; Stiff. Prop.</T>
        <span className="ml-[20px] flex"><Radio /></span><T w={88} className="ml-[2px]">Strain Energy Prop.</T>
      </div>
      <Group className="ml-[5px] mt-[16px] h-[216px] w-[310px]" legend={<span className="ml-[2px] flex bg-[#f0eff0] px-[2px]"><T w={168}>Direct Specification of Modal Damping</T></span>}>
        <div className="mt-[5px] flex h-[20px] items-center pl-[10px]">
          <T w={132}>Damping Ratio for All Modes :</T>
          <div className="ml-[20px] flex h-[20px] w-[64px] items-center border border-[#444] bg-white pl-[5px]"><T w={22}>0.05</T></div>
        </div>
        <Group className="ml-[2px] mt-[14px] h-[164px] w-[303px]" legend={<span className="ml-[4px] flex bg-[#f0eff0] px-[2px]"><T w={114}>Modal Damping Overrides</T></span>}>
          <div className="ml-[5px] mt-[6px] flex h-[141px] w-[288px] border-l-2 border-t-2 border-[#777] font-['Liberation_Sans',sans-serif] text-[12px] text-[#333]">
            <div className="w-[270px] shrink-0 overflow-hidden">
              <div className="flex h-[34px] border-b-2 border-[#444]">
                <div className="w-[33px] shrink-0 border-r-2 border-[#444]" />
                <div className="flex w-[113px] shrink-0 items-center justify-center border-r-2 border-[#444]"><T w={28}>Mode</T></div>
                <div className="flex min-w-0 flex-1 items-center justify-end"><T w={78}>Damping Ratio</T></div>
              </div>
              <div className="flex h-[17px]">
                <div className="flex w-[33px] shrink-0 items-center justify-end border-b-2 border-r-2 border-[#444] pr-[4px]">1</div>
                <div className="w-[112px] shrink-0 border-b border-r border-[#999] bg-[#fef8ee]" />
                <div className="flex-1 border-b border-[#888] bg-[#a4c4ea]" />
              </div>
            </div>
            <div className="flex w-[16px] flex-col items-center bg-[#f2f2f3] pb-[4px] pt-[3px]">
              <Chev d="u" />
              <div className="mt-[2px] h-[108px] w-[14px] bg-[#cdcdce]" />
              <span className="mt-auto flex"><Chev d="d" /></span>
            </div>
          </div>
        </Group>
      </Group>
    </Group>
    <div className="mt-[12px] flex h-[20px] items-center justify-end gap-[6px] pr-[11px]">
      <div className="flex h-[20px] w-[65px] items-center justify-center border-2 border-[#2a72bd] bg-[#e1e1e1]"><T w={14}>OK</T></div>
      <div className="flex h-[19px] w-[66px] items-center justify-center border border-[#b5b5b5] bg-[#e1e1e1]"><T w={31}>Cancel</T></div>
    </div>
  </div>
);

/* ---------- status bar ---------- */

const StatusBar = () => (
  <div className="flex h-[18px] shrink-0 items-center bg-[#262628] text-[11.500px] font-medium text-[#ececec]">
    <T w={86} className="ml-[6px] leading-[14px]">For Help, press F1</T>
    <span className="ml-[439px] h-[14px] w-[1px] bg-[#666]" />
    <T w={47} className="ml-[9px] leading-[14px]">Node-757</T>
    <span className="ml-[22px] h-[14px] w-[1px] bg-[#666]" />
    <T w={104} className="ml-[3px] leading-[14px]">U: -6.684, 3.117, 3.388</T>
    <span className="ml-[52px] h-[14px] w-[1px] bg-[#666]" />
    <T w={104} className="ml-[4px] leading-[14px]">G: -6.684, 3.117, 3.388</T>
    <div className="ml-auto flex h-full w-[341px] shrink-0 items-center bg-[#d8d8d8] text-[11.500px] font-normal text-[#444]">
      <div className="flex h-[17px] w-[47px] shrink-0 items-center justify-between bg-[#e6e6e6] px-[3px]"><T w={14} className="leading-[14px]">kN</T><Chev d="d" /></div>
      <div className="ml-[2px] flex h-[17px] w-[47px] shrink-0 items-center justify-between border-l border-[#555] bg-[#e6e6e6] px-[3px]"><T w={8} className="leading-[14px]">m</T><Chev d="d" /></div>
      <div className="ml-[1px] flex h-full items-center border-l-2 border-[#666] pl-[5px]">
        <Ic className="bg-[#b5dcd4]"><circle cx="8" cy="8" r="3.500" stroke="#556" fill="#fff" /><path d="M8 1v4M8 11v4M1 8h4M11 8h4" stroke="#556" strokeWidth="1.500" /></Ic>
        <Ic className="ml-[5px] bg-[#b5dcd4]"><path d="M5 2v12M1 8h8M8 3v10h5M9 6h4M9 9h4" stroke="#667" strokeWidth="1.300" /></Ic>
        <Ic className="ml-[6px] bg-[#b5dcd4]"><path d="M6 2l6 6-6 6z" fill="#444" stroke="#555" /></Ic>
      </div>
      <div className="ml-[4px] flex h-[17px] w-[41px] shrink-0 items-center justify-between bg-[#e6e6e6] px-[2px]"><T w={20} className="leading-[14px]">none</T><Chev d="d" /></div>
      <div className="ml-[5px] flex h-[16px] w-[16px] shrink-0 items-center justify-center border-2 border-[#5cc8bd] bg-[#e4f4f2] text-[12px] font-bold leading-none">?</div>
      <div className="ml-[6px] h-[16px] w-[16px] shrink-0 bg-[#0ff]" />
      <span className="ml-[6px] w-[7px] text-[#999]">0</span>
      <Ic s={6} h={12} className="ml-[11px]"><path d="M0 3.500L3 0l3 3.500zM0 8.500h6l-3 3.500z" fill="#888" /></Ic>
      <span className="ml-[8px] w-[5px]">/</span>
      <div className="ml-[7px] flex h-[17px] w-[30px] shrink-0 items-center justify-center bg-white">2</div>
      <div className="flex h-full flex-1 flex-col items-center justify-around bg-[#a5a5a5]"><Ic s={6} h={4}><path d="M0 3.500L3 .5l3 3z" fill="#333" /></Ic><Ic s={6} h={4}><path d="M0 .5h6l-3 3z" fill="#333" /></Ic></div>
    </div>
    <div className="h-full w-[6px] shrink-0 bg-[#1b1b1b]" />
  </div>
);

/* ---------- taskbar ---------- */

const Task = ({ bar, on, blue, children }: { bar?: boolean; on?: boolean; blue?: boolean } & Kids) => (
  <div className={"flex h-full w-[45.800px] shrink-0 flex-col items-center " + (blue ? "bg-gradient-to-r from-black from-50% to-[#04161f] to-50%" : "")}>
    <div className={"flex min-h-0 w-[44px] flex-1 items-center justify-center " + (on ? "bg-[#555]" : "")}>{children}</div>
    <div className={"h-[3px] " + (on ? "w-[44px] " : "w-[38px] ") + (bar ? "bg-[#76b5ea]" : "")} />
  </div>
);

const Office = ({ c, l }: { c: string; l: string }) => (
  <Ic s={22}>
    <path d="M11 3h10v16H11z" fill="#fff" stroke={c} /><path d="M14 6h5M14 9h5M14 12h5M14 15h5" stroke={c} strokeWidth="1.500" />
    <path d="M1 3l12-2.500v21L1 19z" fill={c} />
    <text x="7" y="15.500" textAnchor="middle" fontFamily="Liberation Sans" fontWeight="bold" fontSize="11" fill="#fff">{l}</text>
  </Ic>
);

const Taskbar = () => (
  <div className="relative flex h-[37px] shrink-0 overflow-hidden bg-[#222223]">
    <div className="absolute left-[634px] top-[-8px] text-[22px] font-semibold italic leading-[26px] text-[#060606]">
      <T w={417}>Converting nodal inertia to nodal loads</T>
    </div>
    <div className="flex h-full w-[160px] shrink-0 overflow-visible bg-black">
      <Task><Ic s={16}><path d="M0 2.500L7 1.500v6H0zM8 1.300L16 0v7.500H8zM0 8.500h7v6l-7-1zM8 8.500h8V16l-8-1.200z" fill="#fff" /></Ic></Task>
      <Task><Ic s={16}><circle cx="10" cy="6" r="5" stroke="#eee" strokeWidth="1.500" /><path d="M6.500 9.500L1 15" stroke="#eee" strokeWidth="1.600" /></Ic></Task>
      <Task><Ic s={20} h={16}><path d="M5 2h10v12H5zM3 3.500H1v9h2M17 3.500h2v9h-2" stroke="#eee" strokeWidth="1.300" /></Ic></Task>
      <Task blue>
        <Ic s={20} v="0 0 22 22"><path d="M2 9Q4 1 11.500 1 20 1 20.500 9v3.500H7.500q.5 4.500 6 4.500 3 0 6-1.700v4Q16 21 12.500 21 3.500 21 3 13q.5-5 5.500-7.500Q5 6 2 9zM7.800 9h7.400q0-3.700-3.500-3.700T7.800 9z" fill="#1f7bd8" /></Ic>
      </Task>
    </div>
    <div className="ml-[0px] flex h-full pl-[23.200px]">
      <Task bar><Ic s={22}><path d="M1 3h8l2 2h10v14H1z" fill="#f6d673" /><path d="M1 7h20v12H1z" fill="#fbe08c" /><path d="M5 20v-7h12v7h-4v-3H9v3z" fill="#3fb0cf" /></Ic></Task>
      <Task><Ic s={22}><path d="M2 7l18-2v16L2 19z" fill="#fff" /><path d="M7 6V3q4-3 8 0v2" stroke="#fff" strokeWidth="1.500" /><path d="M6 9.500l4-.4v3.400H6zM11 9l5-.5v4h-5zM6 13.500h4V17l-4-.4zM11 13.500h5v4l-5-.5z" fill="#222" /></Ic></Task>
      <Task><Ic s={22}><circle cx="11" cy="11" r="10" fill="#f4c92e" /><path d="M11 11L2.300 6A10 10 0 0119.700 6z" fill="#dc4437" /><path d="M11 11L2.300 6A10 10 0 0011 21z" fill="#2fa352" /><circle cx="11" cy="11" r="4.700" fill="#fff" /><circle cx="11" cy="11" r="3.700" fill="#3f7de0" /></Ic></Task>
      <Task><Ic s={22}><ellipse cx="10" cy="6" rx="8" ry="5" fill="#e4e0e2" stroke="#c25360" strokeWidth="1.500" /><path d="M5 8l9 9M14 6l-5 9" stroke="#ccc" strokeWidth="2" /><circle cx="8" cy="17" r="2.500" stroke="#b7303c" strokeWidth="1.500" /><path d="M13 14l6 6M17 12l3 5" stroke="#3c7f96" strokeWidth="2" /></Ic></Task>
      <Task><Ic s={22}><circle cx="11" cy="11" r="9.500" fill="#255a9f" /><path d="M3 10q4-8 12-7-6 1-7 5" fill="#6ba4dc" /><path d="M4 10l13 0 1 6-9 3-5-3z" fill="#e8edf2" /><path d="M4 10l7 5 6-5" stroke="#8795a8" /></Ic></Task>
      <Task><Ic s={20} h={18}><path d="M0 1h20v16H0z" fill="#e4ebee" /><path d="M6 4h8v10H6z" fill="#1b7bd4" /><path d="M2 5h3M2 8h3M2 11h3M15 5h3M15 8h3M15 11h3" stroke="#8ab" /></Ic></Task>
      <Task bar><Office c="#1d7344" l="X" /></Task>
      <Task bar><Office c="#cf4526" l="P" /></Task>
      <Task bar on><GLogo s={22} /></Task>
      <Task bar><Ic s={24}><path d="M1 1h22v21H1z" fill="#cfdcf2" stroke="#5b74a8" /><path d="M3 1v21M21 1v21" stroke="#45557c" strokeWidth="2" strokeDasharray="2 1.500" /><path d="M6 2h12v9H6z" fill="#eef3fb" /><path d="M6 14h12v8H6z" fill="#39425c" /><circle cx="17" cy="18" r="5" fill="#cdd0cf" stroke="#333" strokeWidth="1.500" /></Ic></Task>
    </div>
    <div className="ml-auto flex h-full w-[233px] shrink-0 items-center text-[12px] text-[#eee]">
      <Ic s={12} h={8}><path d="M1 7l5-5 5 5" stroke="#ddd" strokeWidth="1.500" /></Ic>
      <div className="ml-[11px] flex h-full w-[50px] shrink-0 items-center bg-[#0f0c18]">
        <Ic s={12} h={14} className="mt-[-2px]"><path d="M1 0h10v6H1z" fill="#cfd8ec" /><path d="M1 7h10v6H1z" fill="#5f8fd6" /><path d="M3 9h6" stroke="#fff" /></Ic>
        <Ic s={16} h={10} className="ml-[9px]"><path d="M2.500 1.500h12v7h-12z" stroke="#eee" strokeWidth="1.300" /><path d="M0 4h2v2H0zM4 3h3v4H4z" fill="#eee" /></Ic>
      </div>
      <div className="flex h-full flex-1 items-center bg-black">
        <Ic s={14} className="-ml-[6px]"><path d="M2 13Q3 3 13 2M5 13q1-7 8-8M8 13q1-4 5-5" stroke="#ddd" strokeWidth="1.300" /><circle cx="11.500" cy="12" r="1.500" fill="#fff" /></Ic>
        <Ic s={17} h={14} className="ml-[6px]"><path d="M1 5h3l4-4v12L4 9H1zM10 5q1.500 2 0 4M12 3q3 4 0 8M14 1.500q4 5.500 0 11" stroke="#ddd" strokeWidth="1.200" /></Ic>
        <Ic s={17} h={16} className="ml-[6px]"><path d="M1 1h14v11H8l-3 3v-3H1z" fill="#eee" /><path d="M3 4h10M3 7h7" stroke="#333" /><circle cx="12.500" cy="11" r="3.200" fill="#ddd" stroke="#222" /><path d="M11 11h3" stroke="#222" /></Ic>
        <T w={22} className="ml-[8px]">ENG</T>
        <div className="ml-[13px] flex w-[54px] flex-col items-center pb-[1px]">
          <div className="flex h-[16px] items-center"><T w={39} className="leading-[14px]">7:03 PM</T></div>
          <div className="flex h-[16px] items-center"><T w={54} className="leading-[14px]">10/13/2016</T></div>
        </div>
      </div>
    </div>
  </div>
);

export default function App() {
  return (
    <div className="relative flex h-[720px] w-[1280px] flex-col overflow-hidden bg-[#505050] font-['Noto_Sans','Open_Sans',sans-serif]">
      <Header />
      <Ribbon />
      <Toolbar />
      <div className="flex h-[506px] shrink-0 border-b border-[#333]">
        <LeftPanel />
        <Center />
        <RightPanel />
        <RightTools />
        <Strip />
      </div>
      <StatusBar />
      <Taskbar />
      <Dialog />
    </div>
  );
}
